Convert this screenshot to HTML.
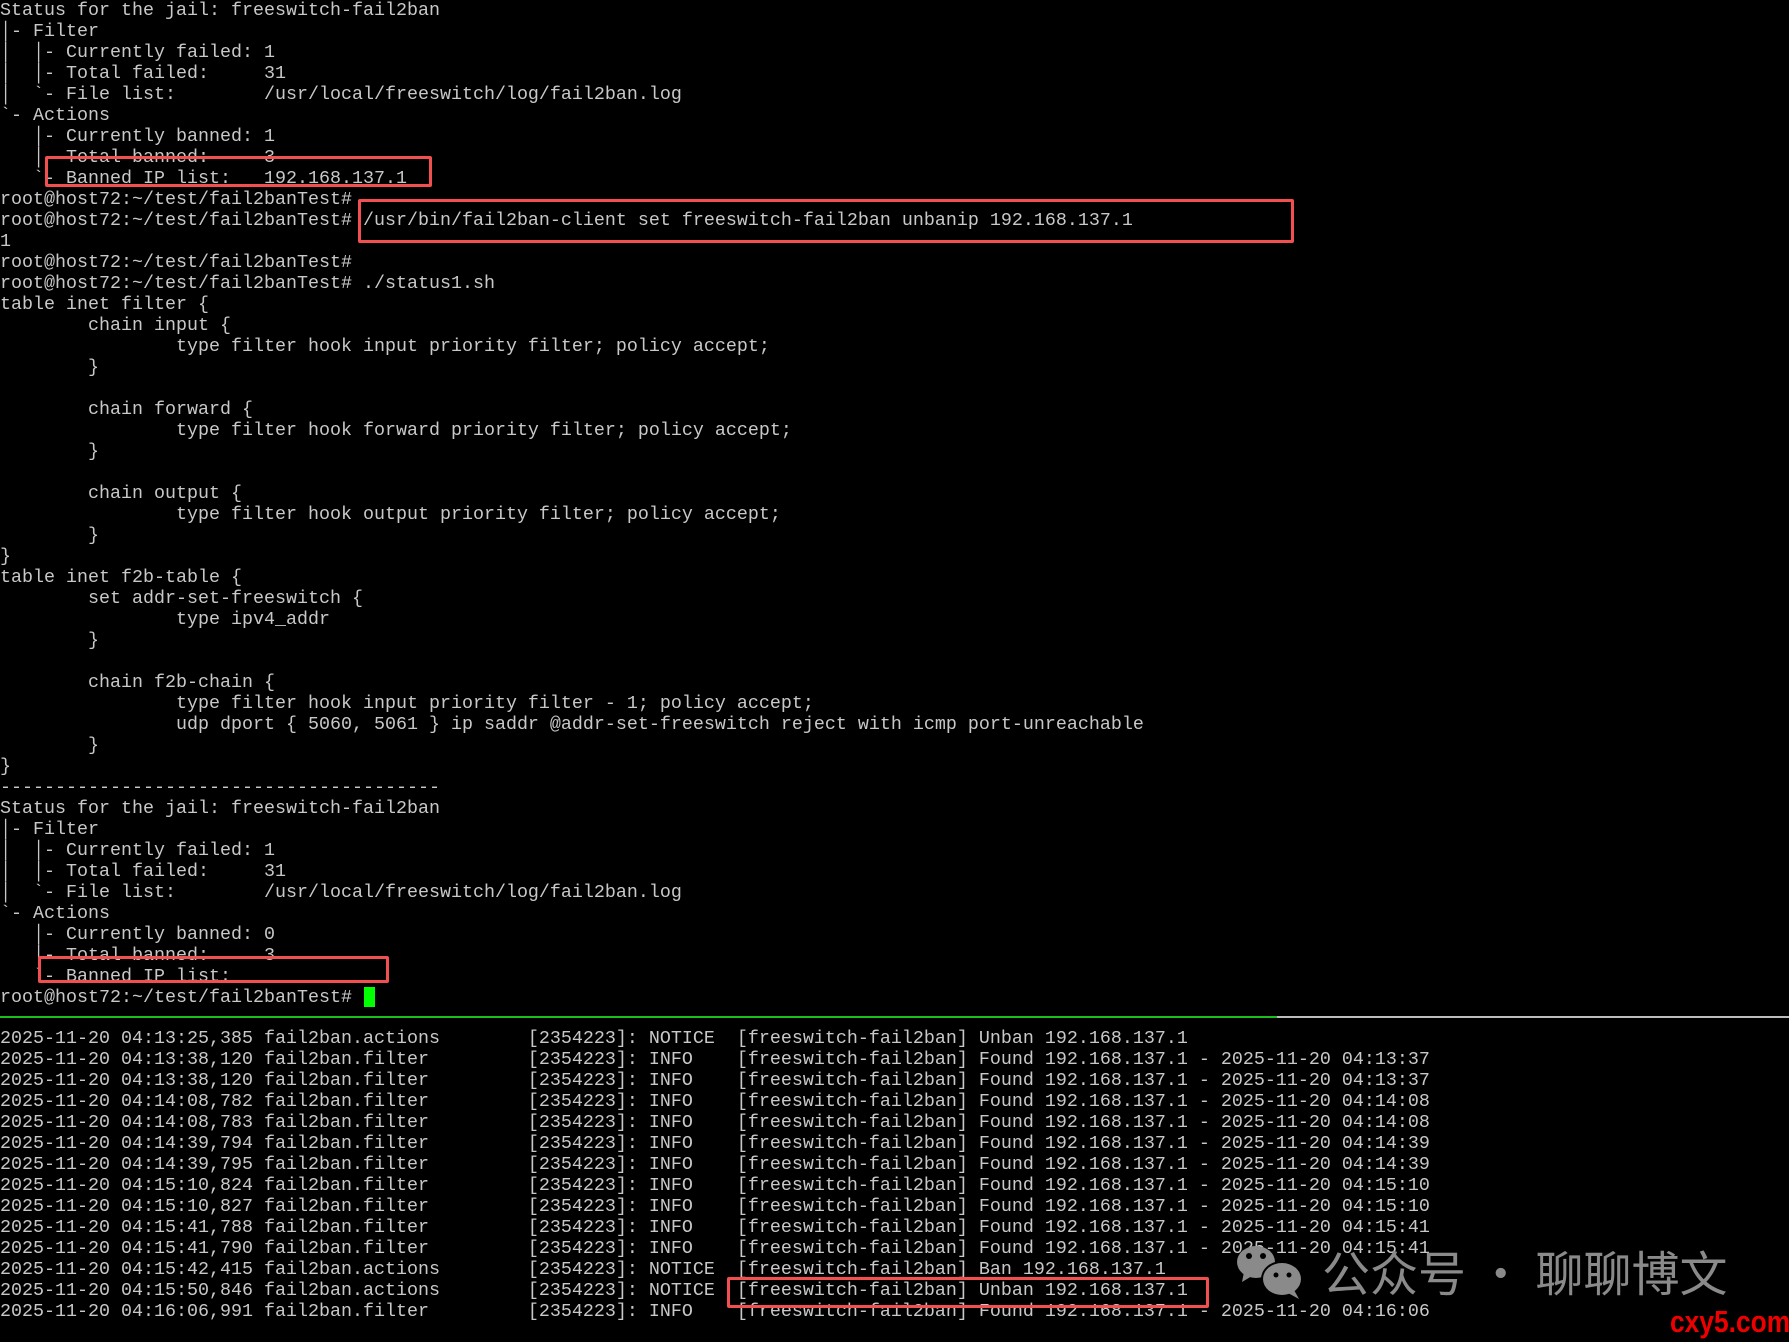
<!DOCTYPE html>
<html><head><meta charset="utf-8"><style>
html,body{margin:0;padding:0;background:#000;width:1789px;height:1342px;overflow:hidden;position:relative}
pre{margin:0;position:absolute;left:0;font-family:"Liberation Mono","Noto Sans CJK SC",monospace;font-size:18.33px;line-height:21px;color:#c8c8c8;white-space:pre}
.box{position:absolute;border:3px solid #f25050;box-sizing:border-box;border-radius:2px}
</style></head><body>
<pre style="top:0">Status for the jail: freeswitch-fail2ban
│- Filter
│  │- Currently failed: 1
│  │- Total failed:     31
│  `- File list:        /usr/local/freeswitch/log/fail2ban.log
`- Actions
   │- Currently banned: 1
   │- Total banned:     3
   `- Banned IP list:   192.168.137.1
root@host72:~/test/fail2banTest#
root@host72:~/test/fail2banTest# /usr/bin/fail2ban-client set freeswitch-fail2ban unbanip 192.168.137.1
1
root@host72:~/test/fail2banTest#
root@host72:~/test/fail2banTest# ./status1.sh
table inet filter {
        chain input {
                type filter hook input priority filter; policy accept;
        }

        chain forward {
                type filter hook forward priority filter; policy accept;
        }

        chain output {
                type filter hook output priority filter; policy accept;
        }
}
table inet f2b-table {
        set addr-set-freeswitch {
                type ipv4_addr
        }

        chain f2b-chain {
                type filter hook input priority filter - 1; policy accept;
                udp dport { 5060, 5061 } ip saddr @addr-set-freeswitch reject with icmp port-unreachable
        }
}
----------------------------------------
Status for the jail: freeswitch-fail2ban
│- Filter
│  │- Currently failed: 1
│  │- Total failed:     31
│  `- File list:        /usr/local/freeswitch/log/fail2ban.log
`- Actions
   │- Currently banned: 0
   │- Total banned:     3
   `- Banned IP list:
root@host72:~/test/fail2banTest# </pre>
<div style="position:absolute;left:364px;top:987px;width:11px;height:20px;background:#00ff00"></div>
<div style="position:absolute;left:0;top:1016px;width:1277px;height:2px;background:#1cc01c"></div>
<div style="position:absolute;left:1277px;top:1016px;width:512px;height:2px;background:#bdbdbd"></div>
<pre style="top:1028px">2025-11-20 04:13:25,385 fail2ban.actions        [2354223]: NOTICE  [freeswitch-fail2ban] Unban 192.168.137.1
2025-11-20 04:13:38,120 fail2ban.filter         [2354223]: INFO    [freeswitch-fail2ban] Found 192.168.137.1 - 2025-11-20 04:13:37
2025-11-20 04:13:38,120 fail2ban.filter         [2354223]: INFO    [freeswitch-fail2ban] Found 192.168.137.1 - 2025-11-20 04:13:37
2025-11-20 04:14:08,782 fail2ban.filter         [2354223]: INFO    [freeswitch-fail2ban] Found 192.168.137.1 - 2025-11-20 04:14:08
2025-11-20 04:14:08,783 fail2ban.filter         [2354223]: INFO    [freeswitch-fail2ban] Found 192.168.137.1 - 2025-11-20 04:14:08
2025-11-20 04:14:39,794 fail2ban.filter         [2354223]: INFO    [freeswitch-fail2ban] Found 192.168.137.1 - 2025-11-20 04:14:39
2025-11-20 04:14:39,795 fail2ban.filter         [2354223]: INFO    [freeswitch-fail2ban] Found 192.168.137.1 - 2025-11-20 04:14:39
2025-11-20 04:15:10,824 fail2ban.filter         [2354223]: INFO    [freeswitch-fail2ban] Found 192.168.137.1 - 2025-11-20 04:15:10
2025-11-20 04:15:10,827 fail2ban.filter         [2354223]: INFO    [freeswitch-fail2ban] Found 192.168.137.1 - 2025-11-20 04:15:10
2025-11-20 04:15:41,788 fail2ban.filter         [2354223]: INFO    [freeswitch-fail2ban] Found 192.168.137.1 - 2025-11-20 04:15:41
2025-11-20 04:15:41,790 fail2ban.filter         [2354223]: INFO    [freeswitch-fail2ban] Found 192.168.137.1 - 2025-11-20 04:15:41
2025-11-20 04:15:42,415 fail2ban.actions        [2354223]: NOTICE  [freeswitch-fail2ban] Ban 192.168.137.1
2025-11-20 04:15:50,846 fail2ban.actions        [2354223]: NOTICE  [freeswitch-fail2ban] Unban 192.168.137.1
2025-11-20 04:16:06,991 fail2ban.filter         [2354223]: INFO    [freeswitch-fail2ban] Found 192.168.137.1 - 2025-11-20 04:16:06</pre>
<div class="box" style="left:45px;top:156px;width:387px;height:31px"></div>
<div class="box" style="left:358px;top:199px;width:936px;height:44px"></div>
<div class="box" style="left:38px;top:956px;width:351px;height:27px"></div>
<div class="box" style="left:727px;top:1277px;width:482px;height:31px"></div>
<svg style="position:absolute;left:1236px;top:1242px" width="75" height="60" viewBox="0 0 75 60">
<ellipse cx="20" cy="20" rx="19" ry="16" fill="#8a8a8a"/>
<path d="M8 30 L6 40 L16 34 Z" fill="#8a8a8a"/>
<ellipse cx="46" cy="37" rx="21" ry="18" fill="#000"/>
<ellipse cx="46" cy="37" rx="19" ry="16" fill="#8a8a8a"/>
<path d="M58 48 L63 57 L52 51 Z" fill="#8a8a8a"/>
<circle cx="13" cy="14" r="3" fill="#000"/><circle cx="27" cy="14" r="3" fill="#000"/>
<circle cx="40" cy="33" r="2.5" fill="#000"/><circle cx="53" cy="33" r="2.5" fill="#000"/>
</svg>
<div style="position:absolute;left:1322px;top:1240px;font-family:'Noto Sans CJK SC',sans-serif;font-size:48px;line-height:60px;color:#8a8a8a;white-space:nowrap">公众号 · 聊聊博文</div>
<div style="position:absolute;left:1670px;top:1303px;font-family:'Liberation Sans',sans-serif;font-weight:bold;font-size:31px;line-height:38px;color:#ee0000;transform:scaleX(0.85);transform-origin:left;white-space:nowrap">cxy5.com</div>
</body></html>
